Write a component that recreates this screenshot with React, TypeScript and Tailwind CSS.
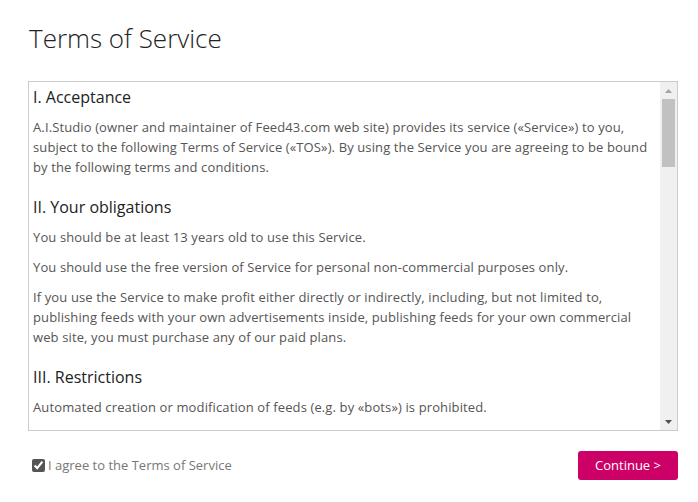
import React from 'react'

const font = { fontFamily: '"Open Sans", "Noto Sans", sans-serif' }

function Para({ lines }: { lines: string[] }) {
  return (
    <p className="mt-[10px] first:mt-0 text-[13px] leading-[20px] tracking-[0.12px] text-[#555] whitespace-nowrap">
      {lines.map((l, i) => (
        <span key={i} className="block">{l}</span>
      ))}
    </p>
  )
}

function Heading({ children, first }: { children: React.ReactNode; first?: boolean }) {
  return (
    <h3 className={`text-[16px] leading-[20px] text-[#222] ${first ? 'mt-0' : 'mt-[20px]'} mb-[9px]`}>
      {children}
    </h3>
  )
}

export default function App() {
  return (
    <div className="w-[698px] h-[502px] bg-white pl-7 pr-5 pt-[20px]" style={font}>
      <h1 className="text-[26px] leading-[36px] font-light text-[#222] ml-px">Terms of Service</h1>

      {/* Terms box */}
      <div className="mt-[25px] h-[350px] border border-[#ccc] flex overflow-hidden">
        <div className="flex-1 overflow-hidden pl-[4px] pt-[5px]">
          <Heading first>I. Acceptance</Heading>
          <Para
            lines={[
              'A.I.Studio (owner and maintainer of Feed43.com web site) provides its service («Service») to you,',
              'subject to the following Terms of Service («TOS»). By using the Service you are agreeing to be bound',
              'by the following terms and conditions.',
            ]}
          />
          <Heading>II. Your obligations</Heading>
          <Para lines={['You should be at least 13 years old to use this Service.']} />
          <Para lines={['You should use the free version of Service for personal non-commercial purposes only.']} />
          <Para
            lines={[
              'If you use the Service to make profit either directly or indirectly, including, but not limited to,',
              'publishing feeds with your own advertisements inside, publishing feeds for your own commercial',
              'web site, you must purchase any of our paid plans.',
            ]}
          />
          <Heading>III. Restrictions</Heading>
          <Para lines={['Automated creation or modification of feeds (e.g. by «bots») is prohibited.']} />
        </div>

        {/* Scrollbar */}
        <div className="w-[17px] bg-[#f0f0f0] flex flex-col items-center">
          <div className="h-[17px] flex items-center justify-center">
            <svg width="7" height="4" viewBox="0 0 7 4"><path d="M3.5 0 L7 4 L0 4 Z" fill="#a3a3a3" /></svg>
          </div>
          <div className="w-[13px] h-[68px] bg-[#c1c1c1]" />
          <div className="flex-1" />
          <div className="h-[17px] flex items-center justify-center">
            <svg width="7" height="4" viewBox="0 0 7 4"><path d="M0 0 L7 0 L3.5 4 Z" fill="#505050" /></svg>
          </div>
        </div>
      </div>

      {/* Footer */}
      <div className="mt-[20px] flex items-center justify-between">
        <label className="flex items-center gap-[3px] pl-[4px] text-[13px] text-[#777]">
          <input type="checkbox" defaultChecked className="w-[13px] h-[13px] m-0 accent-[#555]" />
          I agree to the Terms of Service
        </label>
        <button className="w-[100px] h-[29px] rounded-[3px] bg-[#cc0066] text-white text-[13px]">
          Continue &gt;
        </button>
      </div>
    </div>
  )
}
